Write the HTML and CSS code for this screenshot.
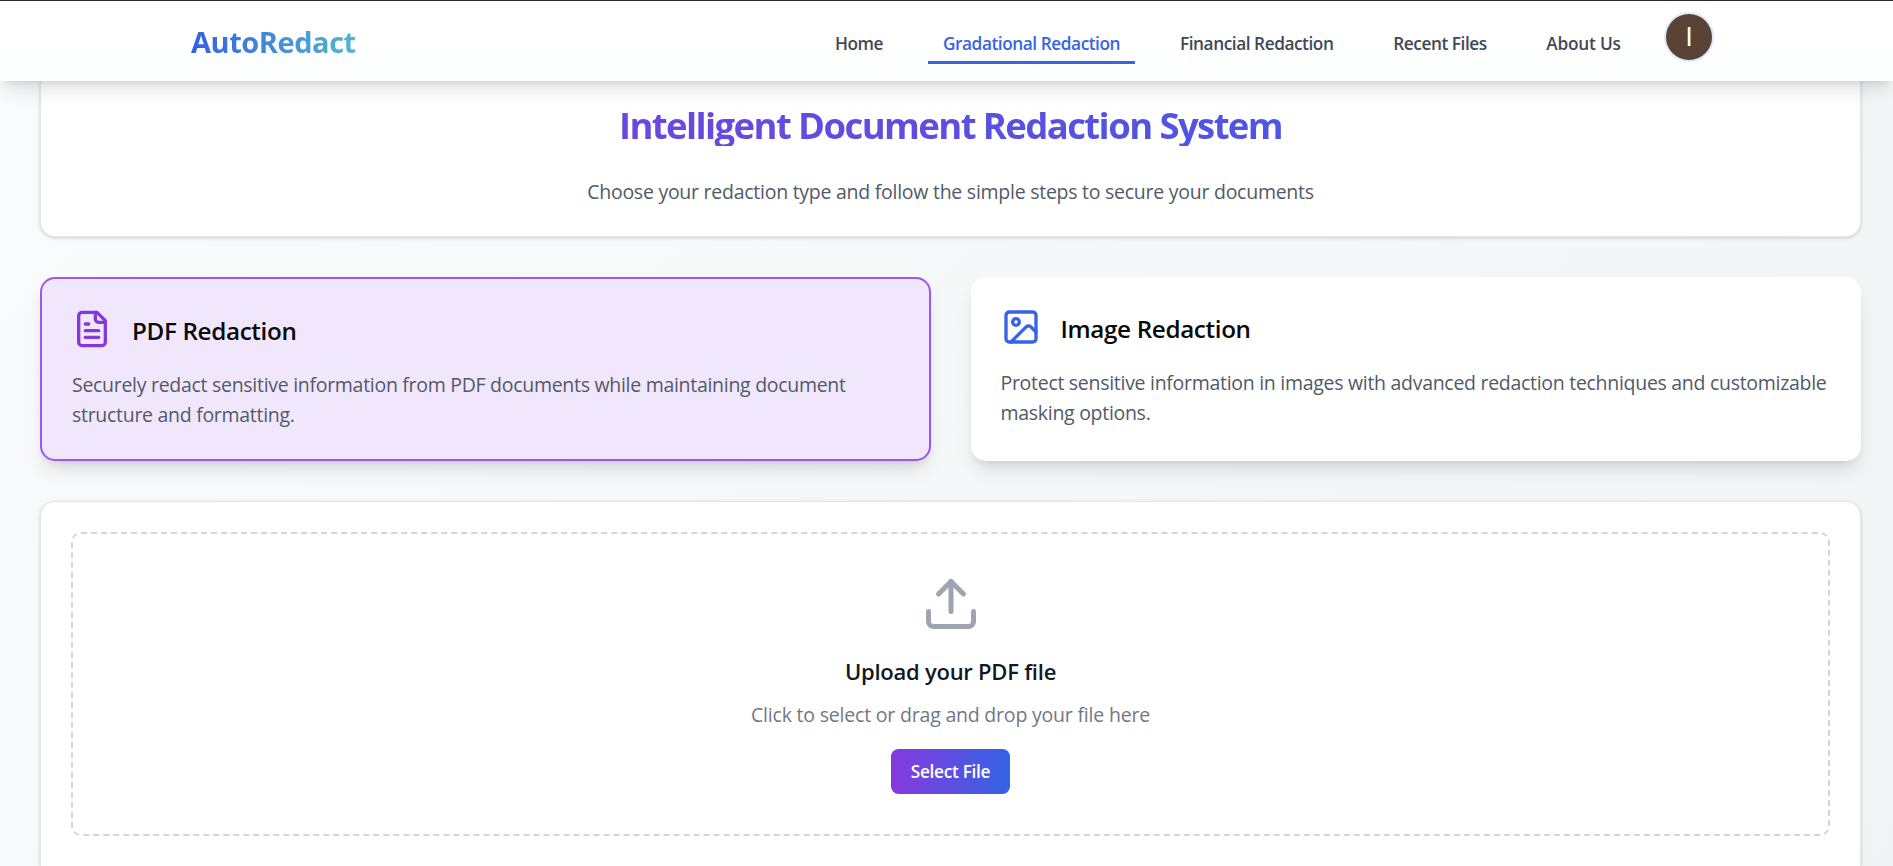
FILE: index.html
```html
<!DOCTYPE html>
<html lang="en">
<head>
<meta charset="utf-8">
<title>AutoRedact</title>
<link rel="stylesheet" href="styles.css">
</head>
<body>
<header class="topbar">
  <a class="logo">AutoRedact</a>
  <nav class="nav">
    <a class="nav-link nav-home">Home</a>
    <a class="nav-link nav-gradational active">Gradational Redaction</a>
    <a class="nav-link nav-financial">Financial Redaction</a>
    <a class="nav-link nav-recent">Recent Files</a>
    <a class="nav-link nav-about">About Us</a>
    <span class="avatar"><span class="initial">I</span></span>
  </nav>
</header>
<main class="page">
  <section class="panel intro">
    <h1 class="title"><span class="title-text">Intelligent Document Redaction System</span></h1>
    <p class="subtitle">Choose your redaction type and follow the simple steps to secure your documents</p>
  </section>
  <section class="types">
    <article class="type selected">
      <div class="type-head">
        <svg class="type-icon purple" viewBox="0 0 24 24"><path d="M15 2H6a2 2 0 0 0-2 2v16a2 2 0 0 0 2 2h12a2 2 0 0 0 2-2V7Z"/><path d="M14 2v4a2 2 0 0 0 2 2h4"/><path d="M10 9H8"/><path d="M16 13H8"/><path d="M16 17H8"/></svg>
        <h2 class="type-title">PDF Redaction</h2>
      </div>
      <p class="type-text">Securely redact sensitive information from PDF documents while maintaining document<br>structure and formatting.</p>
    </article>
    <article class="type">
      <div class="type-head">
        <svg class="type-icon blue" viewBox="0 0 24 24"><rect x="3" y="3" width="18" height="18" rx="2"/><circle cx="9" cy="9" r="2"/><path d="m21 15-3.086-3.086a2 2 0 0 0-2.828 0L6 21"/></svg>
        <h2 class="type-title">Image Redaction</h2>
      </div>
      <p class="type-text">Protect sensitive information in images with advanced redaction techniques and customizable<br>masking options.</p>
    </article>
  </section>
  <section class="panel upload">
    <div class="dropzone">
      <svg class="upload-icon" viewBox="0 0 24 24"><path d="M21 15v4a2 2 0 0 1-2 2H5a2 2 0 0 1-2-2v-4"/><path d="m17 8-5-5-5 5"/><path d="M12 3v12"/></svg>
      <h3 class="upload-title">Upload your PDF file</h3>
      <p class="upload-text">Click to select or drag and drop your file here</p>
      <button class="select">Select File</button>
    </div>
  </section>
</main>
</body>
</html>
```
FILE: styles.css
```css
* { box-sizing: border-box; }
body {
  margin: 0;
  height: 866px;
  overflow: hidden;
  display: flex;
  flex-direction: column;
  border-top: 1px solid #2b2a33;
  background: linear-gradient(135deg, #fafbfc, #f2f3f5);
  font-family: "Open Sans", "Noto Sans", sans-serif;
  font-size: 19.5px;
  letter-spacing: -.29px;
  color: #0a0a0a;
}
h1, h2, h3, p { margin: 0; white-space: nowrap; }
svg { fill: none; stroke: currentColor; stroke-width: 2; stroke-linecap: round; stroke-linejoin: round; flex: none; }

.topbar {
  flex: none;
  height: 80px;
  padding: 0 184px 0 191px;
  display: flex;
  justify-content: space-between;
  align-items: flex-start;
  background: linear-gradient(#fff, #fdfefe);
  box-shadow: 0 12px 19px -4px rgba(0,0,0,.12), 0 5px 8px -5px rgba(0,0,0,.12);
  z-index: 1;
}
.logo {
  margin-top: 21px;
  line-height: 40px;
  font-size: 29px;
  font-weight: 700;
  letter-spacing: -.45px;
  background: linear-gradient(90deg, #3560e2, #52b6d0);
  background-clip: text;
  color: transparent;
}
.nav { display: flex; gap: 30px; }
.nav-link {
  margin-top: 23px;
  height: 40px;
  padding: 0 15px;
  line-height: 39px;
  font-size: 17.25px;
  font-weight: 600;
  color: #414857;
  white-space: nowrap;
  text-align: center;
  letter-spacing: -.45px;
}
.nav-home { width: 78px; }
.nav-gradational { width: 207px; }
.nav-financial { width: 183px; }
.nav-recent { width: 124px; }
.nav-about { width: 103px; padding: 0 14px; letter-spacing: -.2px; }
.active { color: #3863e3; border-bottom: 3px solid #3863e3; }
.avatar {
  width: 50px;
  height: 50px;
  margin: 11px -5px 0 -1px;
  border: 2.5px solid #dde9fc;
  border-radius: 50%;
  background: #5a4236;
  color: #fff;
  display: flex;
  align-items: center;
  justify-content: center;
}
.initial { font: 400 26px/1 "Roboto", sans-serif; letter-spacing: 0; }

.page { flex: 1; padding: 0 32px 0 40px; display: flex; flex-direction: column; gap: 40px; }
.panel {
  background: #fff;
  border: 1px solid #e5e6e7;
  box-shadow: 0 1px 4px rgba(0,0,0,.1), 0 1px 3px rgba(0,0,0,.08);
}
.intro {
  height: 156px;
  flex: none;
  border-top: 0;
  border-radius: 0 0 15px 15px;
  padding: 20px 30px 0;
  text-align: center;
}
.title {
  height: 45px;
  font-size: 36.5px;
  line-height: 49px;
  font-weight: 700;
  letter-spacing: -1.6px;
  background: linear-gradient(90deg, #8639df, #3463e3);
  background-clip: text;
  color: transparent;
}
.subtitle { margin-top: 31px; line-height: 30px; letter-spacing: -.26px; color: #515a67; }

.types { display: grid; grid-template-columns: 1fr 1fr; gap: 40px; flex: none; }
.type {
  height: 184px;
  padding: 30px;
  border-radius: 15px;
  background: #fff;
  box-shadow: 0 12px 19px -4px rgba(0,0,0,.12), 0 5px 8px -5px rgba(0,0,0,.12);
}
.selected { border: 2px solid #9b58ed; background: #f1e7fd; }
.type-head { display: flex; align-items: center; gap: 20px; }
.type-icon { width: 40px; height: 40px; }
.purple { color: #8638df; }
.blue { color: #3763e5; }
.type-title { font-size: 24.25px; line-height: 40px; padding-top: 2px; height: 40px; font-weight: 600; letter-spacing: -.36px; }
.type-text { margin-top: 21px; line-height: 30px; color: #515a67; }

.upload { flex: 1; padding: 30px; border-bottom: 0; border-radius: 15px 15px 0 0; }
.dropzone {
  height: 304px;
  border: 2px dashed #d2d5da;
  border-radius: 10px;
  padding-top: 40px;
  display: flex;
  flex-direction: column;
  align-items: center;
}
.upload-icon { width: 60px; height: 60px; color: #9ea4b0; }
.upload-title { margin-top: 20px; font-size: 22px; line-height: 35px; font-weight: 600; letter-spacing: -.25px; color: #111827; }
.upload-text { margin-top: 11px; line-height: 30px; letter-spacing: -.2px; color: #717885; }
.select {
  margin-top: 19px;
  width: 119px;
  height: 45px;
  padding: 1px 0 0;
  border: 0;
  border-radius: 7.5px;
  background: linear-gradient(90deg, #8639df, #3463e3);
  font: 600 17.25px/44px "Open Sans", sans-serif;
  letter-spacing: -.3px;
  color: #fff;
}
```
